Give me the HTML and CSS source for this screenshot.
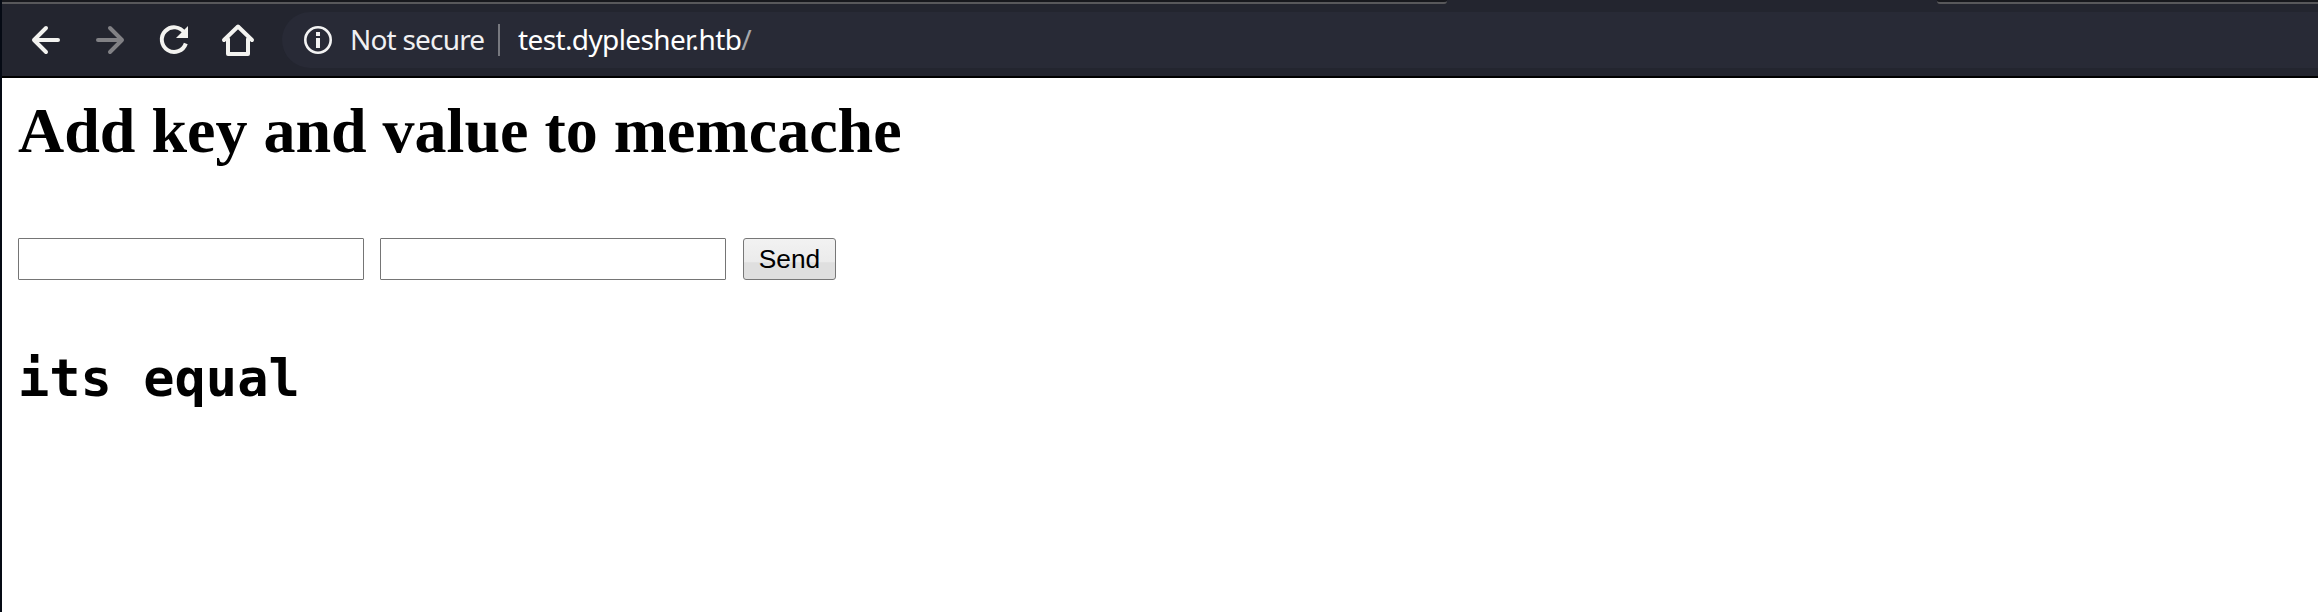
FILE: index.html
```html
<!DOCTYPE html>
<html lang="en">
<head>
<meta charset="utf-8">
<title>test.dyplesher.htb</title>
<link rel="stylesheet" href="styles.css">
</head>
<body>
<div class="window">
  <div class="tabs"><div class="tab tab-left"></div><div class="tab-active"></div><div class="tab tab-right"></div></div>
  <nav class="toolbar">
    <svg class="nav-icons" width="264" height="72" viewBox="2 4 264 72" fill="none" stroke="#f3f3f0" stroke-width="4" stroke-linecap="round" stroke-linejoin="round">
      <path d="M58 40H34M46 28L34 40L46 52"/>
      <path stroke="#818185" d="M98 40H122M110 28L122 40L110 52"/>
      <path d="M184.500 33A12.300 12.300 0 1 0 185.800 43.500" stroke-linecap="butt"/>
      <path d="M188 26V38H176Z" fill="#f3f3f0" stroke="none"/>
      <path d="M224 40L238 26.500L252 40M228 39V54H248V39"/>
    </svg>
    <div class="address">
      <svg class="info" width="28" height="28" viewBox="0 0 28 28"><circle cx="14" cy="14" r="12.700" fill="none" stroke="#f3f3f3" stroke-width="2.600"/><path d="M12 6h4v4h-4zM12 12h4v10h-4z" fill="#f3f3f3"/></svg>
      <span class="status">Not secure</span>
      <span class="divider"></span>
      <span class="url">test.dyplesher.htb<span class="slash">/</span></span>
    </div>
  </nav>
  <main class="page">
    <h1>Add key and value to memcache</h1>
    <form class="form">
      <input type="text" aria-label="Key">
      <input type="text" aria-label="Value">
      <button type="button">Send</button>
    </form>
    <pre>its equal</pre>
  </main>
</div>
</body>
</html>
```
FILE: styles.css
```css
* { box-sizing: border-box; }
body { margin: 0; background: #fff; }
.window { height: 612px; border-left: 2px solid #050a14; overflow: hidden; }
.tabs { display: flex; height: 4px; background: #23252f; }
.tab { background: #17181d; border-bottom: 2px solid #58585b; }
.tab-left { width: 1445px; border-bottom-right-radius: 3px; }
.tab-active { width: 490px; }
.tab-right { flex: 1; border-bottom-left-radius: 3px; }
.toolbar { display: flex; height: 74px; background: #23252f; border-bottom: 2px solid #000; }
.nav-icons { flex: none; }
.address { display: flex; align-items: center; flex: 1; height: 56px; margin: 8px 0 0 16px; padding-left: 22px; background: #282a36; border-radius: 28px 0 0 28px; font: 28px/56px "Noto Sans", sans-serif; white-space: nowrap; }
.info { flex: none; }
.status, .url { padding-bottom: 2px; line-height: 54px; }
.status { width: 148px; margin-left: 18px; color: #f0f0f2; letter-spacing: -0.8px; }
.divider { width: 2px; height: 32px; background: #77787f; }
.url { margin-left: 18px; color: #fff; letter-spacing: -0.62px; }
.slash { color: #a6a7ac; }
.page { padding: 16px 16px 0; }
h1 { margin: 0; font: bold 64px/74px "Liberation Serif", serif; white-space: nowrap; }
.form { display: flex; gap: 16px; margin-top: 70px; }
input { width: 346px; height: 42px; margin: 0; padding: 2px; border: 1px solid #757575; border-radius: 1px; background: #fff; }
button { width: 93px; height: 42px; margin: 0 0 0 1px; padding: 0; border: 1px solid #777; border-radius: 3px; background: linear-gradient(#f2f2f2 0%, #ebebeb 58%, #dfdfdf 59%, #dfdfdf 100%); color: #000; font: 26.300px/38px "Liberation Sans", sans-serif; }
pre { margin: 68px 0 0; font: bold 52px/60px "DejaVu Sans Mono", monospace; }
```
